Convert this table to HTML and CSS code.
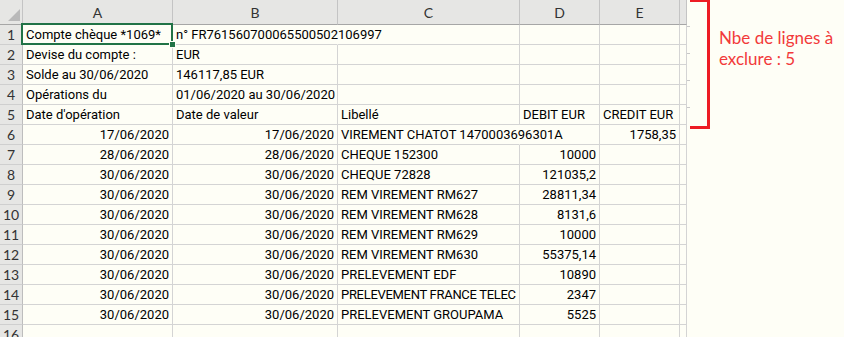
FILE: index.html
```html
<!DOCTYPE html>
<html lang="fr">
<head>
<meta charset="utf-8">
<title>Relevé</title>
<link rel="stylesheet" href="styles.css">
</head>
<body>
<div class="page">
  <div class="sheet">
    <div class="corner"><span class="tri"></span></div>
    <div class="ch">A</div><div class="ch">B</div><div class="ch">C</div><div class="ch">D</div><div class="ch">E</div><div class="ch"></div>

    <div class="rh">1</div>
    <div class="c sel">Compte chèque *1069*<span class="selbox"></span><span class="handle"></span></div>
    <div class="c ov nb">n° FR761560700065500502106997</div><div class="c"></div><div class="c"></div><div class="c"></div><div class="c"></div>

    <div class="rh">2</div>
    <div class="c">Devise du compte :</div><div class="c">EUR</div><div class="c"></div><div class="c"></div><div class="c"></div><div class="c"></div>

    <div class="rh">3</div>
    <div class="c">Solde au 30/06/2020</div><div class="c">146117,85 EUR</div><div class="c"></div><div class="c"></div><div class="c"></div><div class="c"></div>

    <div class="rh">4</div>
    <div class="c">Opérations du</div><div class="c">01/06/2020 au 30/06/2020</div><div class="c"></div><div class="c"></div><div class="c"></div><div class="c"></div>

    <div class="rh">5</div>
    <div class="c">Date d'opération</div><div class="c">Date de valeur</div><div class="c">Libellé</div><div class="c">DEBIT EUR</div><div class="c">CREDIT EUR</div><div class="c"></div>

    <div class="rh">6</div>
    <div class="c r">17/06/2020</div><div class="c r">17/06/2020</div><div class="c ov nb">VIREMENT CHATOT 1470003696301A</div><div class="c"></div><div class="c r">1758,35</div><div class="c"></div>

    <div class="rh">7</div>
    <div class="c r">28/06/2020</div><div class="c r">28/06/2020</div><div class="c">CHEQUE 152300</div><div class="c r">10000</div><div class="c"></div><div class="c"></div>

    <div class="rh">8</div>
    <div class="c r">30/06/2020</div><div class="c r">30/06/2020</div><div class="c">CHEQUE 72828</div><div class="c r">121035,2</div><div class="c"></div><div class="c"></div>

    <div class="rh">9</div>
    <div class="c r">30/06/2020</div><div class="c r">30/06/2020</div><div class="c">REM VIREMENT RM627</div><div class="c r">28811,34</div><div class="c"></div><div class="c"></div>

    <div class="rh">10</div>
    <div class="c r">30/06/2020</div><div class="c r">30/06/2020</div><div class="c">REM VIREMENT RM628</div><div class="c r">8131,6</div><div class="c"></div><div class="c"></div>

    <div class="rh">11</div>
    <div class="c r">30/06/2020</div><div class="c r">30/06/2020</div><div class="c">REM VIREMENT RM629</div><div class="c r">10000</div><div class="c"></div><div class="c"></div>

    <div class="rh">12</div>
    <div class="c r">30/06/2020</div><div class="c r">30/06/2020</div><div class="c">REM VIREMENT RM630</div><div class="c r">55375,14</div><div class="c"></div><div class="c"></div>

    <div class="rh">13</div>
    <div class="c r">30/06/2020</div><div class="c r">30/06/2020</div><div class="c">PRELEVEMENT EDF</div><div class="c r">10890</div><div class="c"></div><div class="c"></div>

    <div class="rh">14</div>
    <div class="c r">30/06/2020</div><div class="c r">30/06/2020</div><div class="c tight">PRELEVEMENT FRANCE TELEC</div><div class="c r">2347</div><div class="c"></div><div class="c"></div>

    <div class="rh">15</div>
    <div class="c r">30/06/2020</div><div class="c r">30/06/2020</div><div class="c">PRELEVEMENT GROUPAMA</div><div class="c r">5525</div><div class="c"></div><div class="c"></div>

    <div class="rh">16</div>
    <div class="c"></div><div class="c"></div><div class="c"></div><div class="c"></div><div class="c"></div><div class="c"></div>
  </div>
  <div class="note">
    <div class="ticks"></div>
    <div class="bracket"></div>
    <div class="note-text">Nbe de lignes à<br>exclure : 5</div>
  </div>
</div>
</body>
</html>
```

FILE: styles.css
```css
html, body {
  margin: 0;
  padding: 0;
  background: #fefef6;
  overflow: hidden;
}

.page {
  display: flex;
  align-items: flex-start;
  width: 844px;
  height: 337px;
  overflow: hidden;
  font-family: Roboto, Lato, "Liberation Sans", sans-serif;
  font-size: 13px;
  color: #000;
}

.sheet {
  display: grid;
  grid-template-columns: 23px 150px 165px 182px 80px 80px 7px;
  grid-template-rows: 25px repeat(16, 20px);
  background: #fefef6;
  flex: none;
}

.corner {
  background: #e6e6e4;
  border-right: 1px solid #c4c4c4;
  border-bottom: 1px solid #a6a6a6;
  display: flex;
  align-items: flex-end;
  justify-content: flex-end;
  padding: 0 2px 3px 0;
}

.tri {
  width: 0;
  height: 0;
  border-left: 12px solid transparent;
  border-bottom: 12px solid #b9b9b9;
}

.ch {
  background: #e6e6e4;
  border-right: 1px solid #c4c4c4;
  border-bottom: 1px solid #a6a6a6;
  text-align: center;
  line-height: 25px;
  font-family: Lato, sans-serif;
  font-size: 14px;
  color: #333;
}

.rh {
  background: #e6e6e4;
  border-right: 1px solid #bdbdbd;
  border-bottom: 1px solid #cfcfcf;
  text-align: center;
  padding-top: 1px;
  line-height: 18px;
  font-family: Lato, sans-serif;
  font-size: 14px;
  color: #333;
}

.c {
  border-right: 1px solid #d4d4d4;
  border-bottom: 1px solid #d4d4d4;
  padding: 1px 3px 0;
  line-height: 18px;
  white-space: nowrap;
  overflow: hidden;
  position: relative;
}

.c.r {
  text-align: right;
}

.c.tight {
  letter-spacing: -0.3px;
}

.c.ov {
  overflow: visible;
}

.c.nb {
  border-right-color: transparent;
}

.c.sel {
  overflow: visible;
}

.selbox {
  position: absolute;
  left: -2px;
  top: -2px;
  right: -1px;
  bottom: -1px;
  border: 2px solid #217346;
  pointer-events: none;
}

.handle {
  position: absolute;
  right: -4px;
  bottom: -4px;
  width: 5px;
  height: 5px;
  background: #217346;
  border: 1px solid #fefef6;
  z-index: 2;
}

.note {
  display: flex;
  align-items: flex-start;
  flex: none;
}

.ticks {
  width: 3px;
  height: 130px;
  background: repeating-linear-gradient(to bottom, transparent 0, transparent 26px, #c8c8c8 26px, #c8c8c8 27px, transparent 27px, transparent 25.5px);
}

.bracket {
  width: 17px;
  height: 124px;
  border: 3px solid #ed1c24;
  border-left: none;
  margin-top: -1px;
}

.note-text {
  margin-left: 9px;
  padding-top: 27px;
  font-family: Lato, "Liberation Sans", sans-serif;
  font-size: 17px;
  line-height: 21px;
  color: #f23a3a;
}
```
